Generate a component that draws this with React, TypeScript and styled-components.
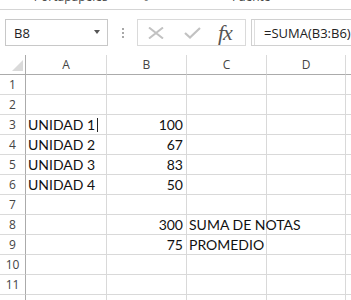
import { FC } from 'react'
import styled, { createGlobalStyle } from 'styled-components'

const GlobalStyle = createGlobalStyle`
  html, body {
    margin: 0;
    padding: 0;
    background: #ffffff;
    overflow: hidden;
  }
  * {
    box-sizing: border-box;
  }
`

type Row = {
  a?: string
  b?: string
  c?: string
  cursor?: boolean
}

const ROWS: Row[] = [
  {},
  {},
  { a: 'UNIDAD 1', b: '100', cursor: true },
  { a: 'UNIDAD 2', b: '67' },
  { a: 'UNIDAD 3', b: '83' },
  { a: 'UNIDAD 4', b: '50' },
  {},
  { b: '300', c: 'SUMA DE NOTAS' },
  { b: '75', c: 'PROMEDIO' },
  {},
  {},
  {},
]

const COLUMNS = ['A', 'B', 'C', 'D', '']

const App: FC = () => {
  return (
    <Page>
      <GlobalStyle />
      <RibbonStrip>
        <GroupLabel $width={142}>Portapapeles</GroupLabel>
        <Launcher>↘</Launcher>
        <GroupLabel $width={200}>Fuente</GroupLabel>
      </RibbonStrip>

      <FormulaRow>
        <NameBox>
          <span>B8</span>
          <DropArrow />
        </NameBox>
        <Grip>
          <i />
          <i />
          <i />
        </Grip>
        <ButtonBox>
          <ToolIcon viewBox="0 0 16 12" width={16} height={12}>
            <path d="M1 0.5 L15 11.5 M15 0.5 L1 11.5" stroke="#c2c2c2" strokeWidth="2" fill="none" />
          </ToolIcon>
          <ToolIcon viewBox="0 0 17 12" width={17} height={12}>
            <path d="M1 6 L6 10.5 L16 1" stroke="#c2c2c2" strokeWidth="2.2" fill="none" />
          </ToolIcon>
          <FxLabel>fx</FxLabel>
        </ButtonBox>
        <FormulaBox>=SUMA(B3:B6)</FormulaBox>
      </FormulaRow>

      <Sheet>
        <Corner>
          <svg width="11" height="11" viewBox="0 0 11 11">
            <polygon points="11,0 11,11 0,11" fill="#dadada" />
          </svg>
        </Corner>
        {COLUMNS.map((col, i) => (
          <ColHeader key={i} $last={i === COLUMNS.length - 1}>
            {col}
          </ColHeader>
        ))}
        {ROWS.map((row, r) => (
          <RowGroup key={r}>
            <RowHeader>{r + 1}</RowHeader>
            <Cell>
              {row.a}
              {row.cursor && <Caret />}
            </Cell>
            <Cell $align="right">{row.b}</Cell>
            <Cell>{row.c}</Cell>
            <Cell />
            <Cell $last />
          </RowGroup>
        ))}
      </Sheet>
    </Page>
  )
}

export default App

const Page = styled.div`
  width: 351px;
  height: 300px;
  overflow: hidden;
  background: #ffffff;
`

const RibbonStrip = styled.div`
  height: 10px;
  display: flex;
  align-items: flex-start;
  border-bottom: 1px solid #d5d5d5;
  overflow: hidden;
`

const GroupLabel = styled.div<{ $width: number }>`
  width: ${(p) => p.$width}px;
  text-align: center;
  margin-top: -11px;
  font-family: 'Open Sans', sans-serif;
  font-size: 12px;
  line-height: 16px;
  color: #444444;
`

const Launcher = styled.div`
  width: 10px;
  margin-top: -9px;
  font-family: 'DejaVu Sans', sans-serif;
  font-size: 9px;
  line-height: 14px;
  color: #666666;
`

const FormulaRow = styled.div`
  display: flex;
  align-items: stretch;
  height: 27px;
  margin-top: 9px;
  padding-left: 5px;
`

const NameBox = styled.div`
  width: 103px;
  display: flex;
  align-items: center;
  justify-content: space-between;
  padding: 0 7px 0 8px;
  border: 1px solid #c8c8c8;
  font-family: 'Open Sans', sans-serif;
  font-size: 13px;
  color: #222222;
`

const DropArrow = styled.span`
  width: 0;
  height: 0;
  margin-top: -2px;
  border-left: 3.5px solid transparent;
  border-right: 3.5px solid transparent;
  border-top: 4px solid #555555;
`

const Grip = styled.div`
  width: 29px;
  display: flex;
  flex-direction: column;
  align-items: center;
  justify-content: center;
  gap: 2px;

  i {
    width: 2px;
    height: 2px;
    background: #a8a8a8;
  }
`

const ButtonBox = styled.div`
  width: 109px;
  display: flex;
  align-items: center;
  padding-left: 10px;
  border: 1px solid #dadada;
`

const ToolIcon = styled.svg`
  margin-right: 20px;
  flex: none;
`

const FxLabel = styled.span`
  margin-left: -3px;
  font-family: 'Liberation Serif', serif;
  font-style: italic;
  font-size: 22px;
  line-height: 24px;
  color: #555555;
  letter-spacing: -1px;
`

const FormulaBox = styled.div`
  flex: 1;
  margin-left: 5px;
  display: flex;
  align-items: center;
  padding-left: 12px;
  border: 1px solid #d0d0d0;
  border-right: none;
  box-shadow: inset 2px 0 0 #ffffff, inset 3px 0 0 #dedede;
  font-family: 'Open Sans', sans-serif;
  font-size: 13px;
  color: #222222;
  white-space: nowrap;
`

const Sheet = styled.div`
  margin-top: 9px;
  display: grid;
  grid-template-columns: 26px 81px 80px 80px 79px 1fr;
  grid-auto-rows: 20px;
`

const RowGroup = styled.div`
  display: contents;
`

const Corner = styled.div`
  display: flex;
  align-items: flex-end;
  justify-content: flex-end;
  padding: 0 2px 3px 0;
  border-right: 1px solid #ababab;
  border-bottom: 1px solid #ababab;
`

const ColHeader = styled.div<{ $last?: boolean }>`
  display: flex;
  align-items: center;
  justify-content: center;
  border-bottom: 1px solid #ababab;
  border-right: ${(p) => (p.$last ? 'none' : '1px solid #dadada')};
  font-family: 'Open Sans', sans-serif;
  font-size: 12px;
  color: #444444;
`

const RowHeader = styled.div`
  display: flex;
  align-items: center;
  justify-content: center;
  border-right: 1px solid #ababab;
  border-bottom: 1px solid #dadada;
  font-family: 'Open Sans', sans-serif;
  font-size: 12px;
  color: #444444;
`

const Cell = styled.div<{ $align?: 'left' | 'right'; $last?: boolean }>`
  position: relative;
  display: flex;
  align-items: center;
  justify-content: ${(p) => (p.$align === 'right' ? 'flex-end' : 'flex-start')};
  padding: 0 3px 0 2px;
  border-right: ${(p) => (p.$last ? 'none' : '1px solid #d9d9d9')};
  border-bottom: 1px solid #d9d9d9;
  font-family: 'Lato', 'Open Sans', sans-serif;
  font-size: 14px;
  color: #111111;
  white-space: nowrap;
`

const Caret = styled.span`
  display: inline-block;
  width: 1px;
  height: 14px;
  margin-left: 2px;
  background: #222222;
`
